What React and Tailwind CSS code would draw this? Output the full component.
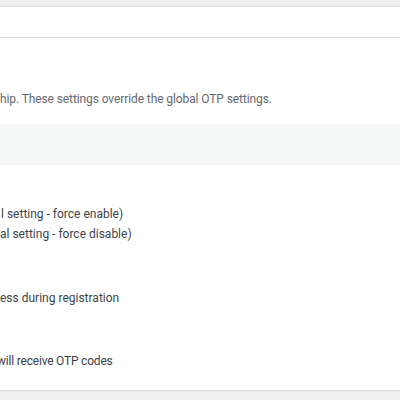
import React from 'react';

const App = () => {
  const font = { fontFamily: 'Roboto, "Noto Sans", sans-serif' };

  return (
    <div className="w-[400px] h-[400px] overflow-hidden bg-[#f0f0f1] text-[12px]" style={font}>
      {/* header strip */}
      <div className="mt-[6px] h-[32px] bg-white border-y border-[#dcdcde]"></div>

      {/* main panel */}
      <div className="bg-white border-b border-[#dcdcde] pt-[51px] pb-[19px] overflow-hidden">
        <p className="h-[20px] leading-[20px] text-[#646970] whitespace-nowrap tracking-[-0.1px]">
          hip. These settings override the global OTP settings.
        </p>

        <div className="mt-[15px] h-[41px] bg-[#f6f7f7]"></div>

        <div className="mt-[39px] text-[#3c434a]">
          <div className="h-[20px] leading-[20px] whitespace-nowrap pl-[1px]">l setting - force enable)</div>
          <div className="h-[20px] leading-[20px] whitespace-nowrap">al setting - force disable)</div>
        </div>

        <p className="mt-[44px] h-[20px] leading-[20px] text-[#3c434a] whitespace-nowrap">
          ess during registration
        </p>

        <p className="mt-[43px] h-[20px] leading-[20px] text-[#3c434a] whitespace-nowrap -ml-[3px] tracking-[-0.2px]">
          will receive OTP codes
        </p>
      </div>
    </div>
  );
};

export default App;
